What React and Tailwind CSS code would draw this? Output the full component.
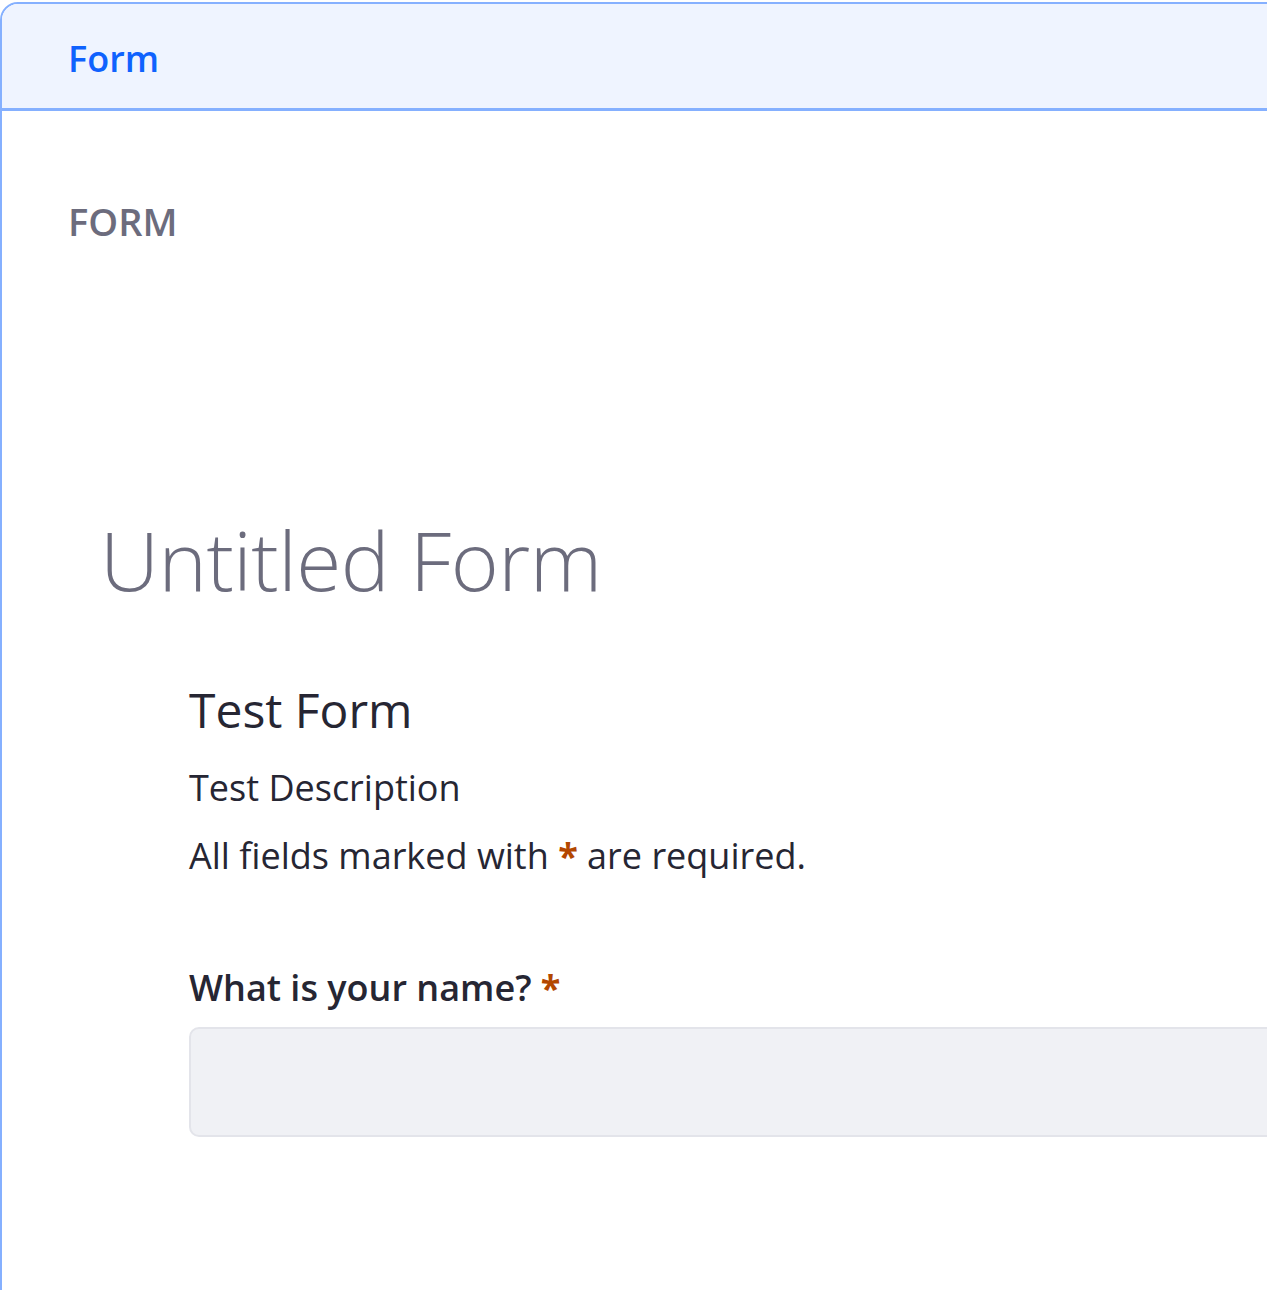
import React from "react";

const Req = () => <span className="text-[#b34700] font-bold">*</span>;

export default function App() {
  return (
    <div className="w-full h-[1290px] overflow-hidden bg-white pt-[2px] font-['Open_Sans',sans-serif]">
      <div className="w-[1500px] h-[1400px] border-2 border-[#85b0ff] rounded-tl-[18px] overflow-hidden">
        {/* Header */}
        <div className="h-[107px] bg-[#eff4ff] border-b-[3px] border-[#85b0ff] flex items-center pl-[66px] pt-[5px]">
          <span className="text-[#0f62fe] text-[36px] font-semibold leading-none">Form</span>
        </div>

        <div className="pl-[66px] pt-[91px]">
          <h2 className="text-[#6c6c7d] text-[38px] font-semibold leading-none">FORM</h2>
        </div>

        <div className="pl-[98px] pt-[278px]">
          <h1 className="text-[#6c6c7d] text-[82px] font-light leading-none tracking-[-0.5px]">Untitled Form</h1>
        </div>

        <div className="pl-[187px] pt-[86px] text-[#262633]">
          <h3 className="text-[48px] leading-none">Test Form</h3>
          <p className="text-[36px] leading-none mt-[36px]">Test Description</p>
          <p className="text-[36px] leading-none mt-[32px]">
            All fields marked with <Req /> are required.
          </p>

          <label className="block text-[36px] font-semibold leading-none mt-[96px]">
            What is your name? <Req />
          </label>
          <div className="mt-[21px] h-[110px] bg-[#f0f1f5] border-2 border-[#e3e4ea] rounded-[10px]" />
        </div>
      </div>
    </div>
  );
}
